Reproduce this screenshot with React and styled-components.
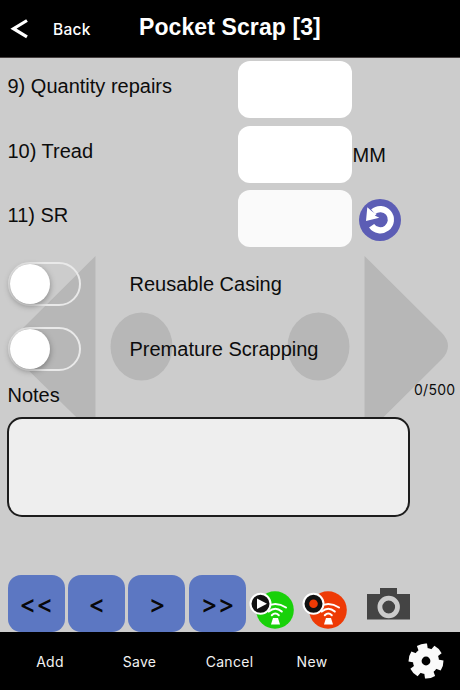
import React, { useState } from "react";
import styled, { createGlobalStyle } from "styled-components";

const GlobalStyle = createGlobalStyle`
	* {
		box-sizing: border-box;
	}
	body {
		margin: 0;
		background: #ccc;
		font-family: "Liberation Sans", Arial, sans-serif;
	}
	button, input, textarea {
		font-family: inherit;
		margin: 0;
		padding: 0;
		border: none;
		outline: none;
	}
	svg {
		display: block;
	}
`;

const Screen = styled.div`
	width: 460px;
	height: 690px;
	display: flex;
	flex-direction: column;
	overflow: hidden;
`;

const Header = styled.header`
	height: 58px;
	flex: none;
	display: grid;
	grid-template-columns: 139px 1fr;
	background: #000;
	color: #fff;
	border-bottom: 1px solid #464040;
`;

const BackButton = styled.button`
	display: flex;
	align-items: center;
	gap: 24px;
	padding: 1px 0 0 10px;
	background: none;
	color: #fff;
	font: 500 15.5px Inter, sans-serif;
	letter-spacing: 0.3px;
`;

const Title = styled.h1`
	margin: 0;
	padding-top: 14px;
	font-size: 23px;
	line-height: 27px;
	letter-spacing: 0.1px;
	white-space: nowrap;
`;

const Content = styled.main`
	position: relative;
	flex: 1;
	display: flex;
	flex-direction: column;
	padding: 3px 0 0 7.5px;
	background: #ccc;
	color: #0c0c0c;
	font-size: 20px;
`;

const Watermark = styled.svg`
	position: absolute;
	left: 0;
	top: 0;
	fill: #b7b7b7;
`;

const Form = styled.div`
	position: relative;
	display: flex;
	flex-direction: column;
`;

const Field = styled.div`
	height: 64.7px;
	display: grid;
	grid-template-columns: 230px 114px 1fr;
	align-items: start;
`;

const Label = styled.label`
	padding-top: 14px;
	line-height: 23px;
	white-space: nowrap;
`;

const Input = styled.input`
	width: 114px;
	height: 57px;
	border-radius: 12px;
	background: ${props => props.readOnly ? "#fafafa" : "#fff"};
`;

const Unit = styled.span`
	padding: 18px 0 0 1px;
	line-height: 23px;
`;

const RoundButton = styled.button`
	width: 42px;
	height: 42px;
	margin: 9px 0 0 7.5px;
	background: none;
`;

const SwitchRow = styled.div`
	height: 64.5px;
	display: flex;
	align-items: flex-start;
	gap: 49px;
	padding-top: 7px;
`;

const Track = styled.button`
	width: 73px;
	height: 44px;
	display: flex;
	align-items: center;
	justify-content: ${props => props.$on ? "flex-end" : "flex-start"};
	border: 2px solid #e9e9e9;
	border-radius: 22px;
	background: ${props => props.$on ? "#5c77c2" : "transparent"};
`;

const Knob = styled.span`
	width: 40px;
	height: 40px;
	border-radius: 50%;
	background: #fff;
	box-shadow: 0 2px 6px rgba(0, 0, 0, 0.35);
`;

const SwitchText = styled.span`
	padding-top: 11px;
	line-height: 23px;
`;

const NotesHead = styled.div`
	height: 33px;
	display: flex;
	justify-content: space-between;
	line-height: 23px;
`;

const Counter = styled.span`
	padding-right: 4.5px;
	font: 400 14px/17px Inter, sans-serif;
	letter-spacing: 0.3px;
	margin-top: -3px;
`;

const NotesArea = styled.textarea`
	width: 403px;
	height: 100px;
	margin-left: -0.5px;
	resize: none;
	border: 2px solid #1c1c1c;
	border-radius: 15px;
	background: #eee;
`;

const Tools = styled.div`
	display: flex;
	gap: 3.4px;
	margin-top: auto;
	height: 57px;
	position: relative;
`;

const NavButton = styled.button`
	width: 57px;
	height: 57px;
	padding: 0 0 0 1px;
	border-radius: 13px;
	background: #5c77c2;
	color: #080808;
	font: 500 25px Inter, sans-serif;
	letter-spacing: 0.2px;
	font-feature-settings: "calt" 0;
`;

const IconButton = styled.button`
	width: ${props => props.$width}px;
	height: 57px;
	margin-left: ${props => props.$gap}px;
	background: none;
`;

const Footer = styled.footer`
	height: 58px;
	flex: none;
	display: grid;
	grid-template-columns: 100px 79px 101px 64px 1fr;
	align-items: center;
	background: #000;
`;

const FooterButton = styled.button`
	background: none;
	color: #f2f2f2;
	font: 400 14px Inter, sans-serif;
	letter-spacing: 0.3px;
`;

const Settings = styled.button`
	width: 36px;
	height: 36px;
	margin-left: 64px;
	background: none;
`;

const Antenna = ({ color, children }) => (
	<svg width="46" height="57" viewBox="0 0 46 57">
		<circle cx="26" cy="35" r="18.8" fill={color} />
		<g fill="none" stroke="#fff" strokeWidth="2" strokeLinecap="round">
			<path d="M15.5 32.5Q26.3 25.5 37 32.5" />
			<path d="M19.8 36.6Q26.3 30.8 32.8 36.6" />
			<path d="M22.8 40.2Q26.3 36.6 29.8 40.2" />
		</g>
		<path d="M24 43h5l2 6.5h-9z" fill="#fff" />
		<circle cx="11.5" cy="28.8" r="10" fill="#111" stroke="#fff" strokeWidth="2" />
		{children}
	</svg>
);

const Undo = () => (
	<svg width="42" height="42" viewBox="0 0 42 42">
		<circle cx="21" cy="21" r="21" fill="#5c5db5" />
		<path d="M14.2 12.8A10.6 10.6 0 1 1 12.6 26.7" fill="none" stroke="#fff" strokeWidth="6.2" />
		<path d="M8.3 8.2 12.5 12 17.5 15.2 15.8 16.6 20.3 18.7 7 22z" fill="#fff" />
	</svg>
);

const Gear = () => (
	<svg width="36" height="36" viewBox="-18 -18 36 36">
		<g fill="#fafafa">
			<circle r="13" />
			{[-14, 46, 106, 166, 226, 286].map(a => (
				<path key={a} d="M-4.6-11-5.2-16.7Q0-18.4 5.2-16.7L4.6-11z" transform={`rotate(${a})`} />
			))}
		</g>
		<circle r="4.4" fill="#000" />
	</svg>
);

const App = () => {
	const [reusable, setReusable] = useState(false);
	const [premature, setPremature] = useState(false);
	const [notes, setNotes] = useState("");

	return (
		<Screen>
			<GlobalStyle />
			<Header>
				<BackButton>
					<svg width="19" height="20" viewBox="0 0 19 20">
						<path d="M17 1.5 3.5 9.7 17 17.8" fill="none" stroke="#fff" strokeWidth="3.2" />
					</svg>
					Back
				</BackButton>
				<Title>Pocket Scrap [3]</Title>
			</Header>
			<Content>
				<Watermark width="460" height="574" viewBox="0 58 460 574">
					<path d="M95.5 256V436L18 360Q5 346 18 333z" />
					<path d="M364.5 256V436L442 359Q454 346 442 333z" />
					<ellipse cx="141.5" cy="346.5" rx="31" ry="34" />
					<ellipse cx="318.5" cy="346.5" rx="31" ry="34" />
				</Watermark>
				<Form>
					<Field>
						<Label>9) Quantity repairs</Label>
						<Input />
					</Field>
					<Field>
						<Label>10) Tread</Label>
						<Input />
						<Unit>MM</Unit>
					</Field>
					<Field>
						<Label>11) SR</Label>
						<Input readOnly />
						<RoundButton><Undo /></RoundButton>
					</Field>
					<SwitchRow>
						<Track $on={reusable} onClick={() => setReusable(!reusable)}><Knob /></Track>
						<SwitchText>Reusable Casing</SwitchText>
					</SwitchRow>
					<SwitchRow>
						<Track $on={premature} onClick={() => setPremature(!premature)}><Knob /></Track>
						<SwitchText>Premature Scrapping</SwitchText>
					</SwitchRow>
					<NotesHead>
						<span>Notes</span>
						<Counter>{notes.length}/500</Counter>
					</NotesHead>
					<NotesArea maxLength={500} value={notes} onChange={e => setNotes(e.target.value)} />
				</Form>
				<Tools>
					<NavButton>&lt;&lt;</NavButton>
					<NavButton>&lt;</NavButton>
					<NavButton>&gt;</NavButton>
					<NavButton>&gt;&gt;</NavButton>
					<IconButton $width={46} $gap={0}>
						<Antenna color="#19d10a">
							<path d="M8 23.5 18 28.8 8 34z" fill="#fff" />
						</Antenna>
					</IconButton>
					<IconButton $width={46} $gap={3.5}>
						<Antenna color="#ee3a05">
							<circle cx="11.5" cy="28.8" r="4.3" fill="#ee3a05" />
						</Antenna>
					</IconButton>
					<IconButton $width={44} $gap={14.3}>
						<svg width="44" height="57" viewBox="0 0 44 57">
							<path d="M1 19h13v-6h17v6h13v25.5H1z" fill="#444" />
							<circle cx="22.7" cy="32" r="8.8" fill="none" stroke="#ccc" strokeWidth="4.8" />
						</svg>
					</IconButton>
				</Tools>
			</Content>
			<Footer>
				<FooterButton>Add</FooterButton>
				<FooterButton>Save</FooterButton>
				<FooterButton>Cancel</FooterButton>
				<FooterButton>New</FooterButton>
				<Settings><Gear /></Settings>
			</Footer>
		</Screen>
	);
};

export default App;
